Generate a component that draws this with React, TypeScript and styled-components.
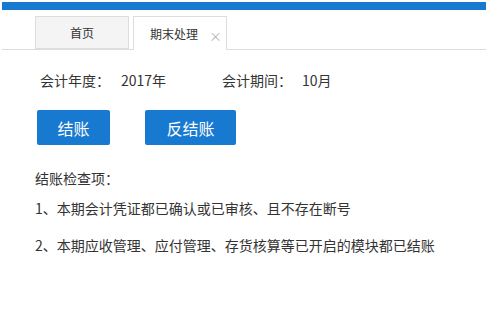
import React from 'react';
import styled, { createGlobalStyle } from 'styled-components';

const GlobalStyle = createGlobalStyle`
  body {
    margin: 2px;
    background: #fff;
    font-family: "Microsoft YaHei", "Noto Sans CJK SC", "Noto Sans", sans-serif;
    color: #333;
  }
`;

const Page = styled.div`
  width: 484px;
`;

const TopBar = styled.div`
  height: 8px;
  background: #1879d1;
`;

const TabBar = styled.div`
  display: flex;
  align-items: flex-end;
  gap: 4px;
  margin-top: 6px;
  padding-left: 33px;
  border-bottom: 1px solid #dddddd;
  height: 33px;
`;

const Tab = styled.div<{ $active?: boolean }>`
  position: relative;
  box-sizing: border-box;
  width: 94px;
  height: ${p => (p.$active ? '34px' : '33px')};
  margin-bottom: ${p => (p.$active ? '-1px' : '0')};
  display: flex;
  align-items: center;
  justify-content: ${p => (p.$active ? 'flex-start' : 'center')};
  padding-left: ${p => (p.$active ? '16px' : '0')};
  border: 1px solid #dddddd;
  border-bottom: ${p => (p.$active ? 'none' : '1px solid #dddddd')};
  background: ${p => (p.$active ? '#ffffff' : '#f4f4f4')};
  font-size: 12px;
  color: #333;
`;

const Close = styled.span`
  position: absolute;
  right: 4px;
  top: 9px;
  font-size: 13px;
  color: #b5b5b5;
`;

const Content = styled.div`
  padding: 20px 0 0 38px;
`;

const InfoRow = styled.div`
  display: flex;
  font-size: 14px;
  line-height: 20px;
  color: #333;
`;

const InfoItem = styled.div<{ $w: number }>`
  width: ${p => p.$w}px;
  display: flex;
`;

const Label = styled.span<{ $w: number }>`
  width: ${p => p.$w}px;
`;

const Buttons = styled.div`
  display: flex;
  gap: 35px;
  margin-top: 20px;
  margin-left: -3px;
`;

const Button = styled.button<{ $w: number }>`
  width: ${p => p.$w}px;
  height: 35px;
  border: none;
  border-radius: 2px;
  background: #1879d1;
  color: #fff;
  font-family: inherit;
  font-size: 16px;
  padding: 0;
  cursor: pointer;
`;

const Checks = styled.div`
  margin-top: 23px;
  margin-left: -5px;
  font-size: 14px;
  color: #333;
`;

const CheckTitle = styled.div`
  line-height: 20px;
`;

const CheckItem = styled.div`
  line-height: 20px;
  margin-top: 10px;
  & + & {
    margin-top: 17px;
  }
`;

export default function App() {
  return (
    <>
      <GlobalStyle />
      <Page>
        <TopBar />
        <TabBar>
          <Tab>首页</Tab>
          <Tab $active>
            期末处理
            <Close>×</Close>
          </Tab>
        </TabBar>
        <Content>
          <InfoRow>
            <InfoItem $w={182}>
              <Label $w={81}>会计年度：</Label>
              <span>2017年</span>
            </InfoItem>
            <InfoItem $w={200}>
              <Label $w={80}>会计期间：</Label>
              <span>10月</span>
            </InfoItem>
          </InfoRow>
          <Buttons>
            <Button $w={73}>结账</Button>
            <Button $w={91}>反结账</Button>
          </Buttons>
          <Checks>
            <CheckTitle>结账检查项：</CheckTitle>
            <CheckItem>1、本期会计凭证都已确认或已审核、且不存在断号</CheckItem>
            <CheckItem>2、本期应收管理、应付管理、存货核算等已开启的模块都已结账</CheckItem>
          </Checks>
        </Content>
      </Page>
    </>
  );
}
